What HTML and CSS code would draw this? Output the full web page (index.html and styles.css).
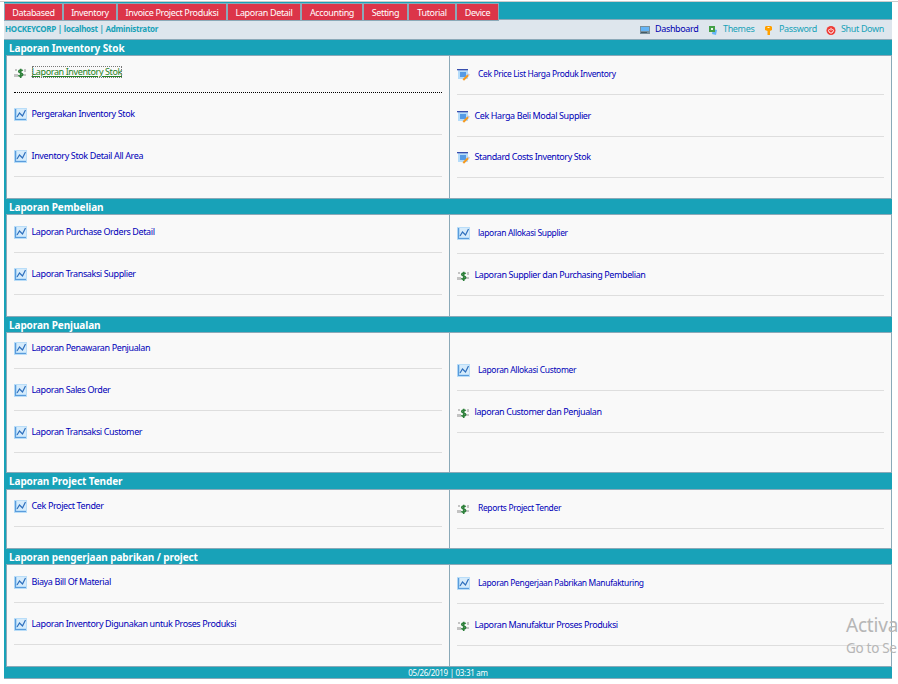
FILE: index.html
```
<!DOCTYPE html>
<html lang="id">
<head>
<meta charset="utf-8">
<title>Laporan</title>
<link rel="stylesheet" href="styles.css">
</head>
<body>
<svg class="defs" aria-hidden="true">
  <symbol id="chart" viewBox="0 0 13 13"><path fill="#b9ddf8" d="M0 0h13v13H0z"/><path fill="#d5ebfb" d="M3 1h9v9H3z"/><path d="M1.500 1v10.500H12" fill="none" stroke="#5a9cdc" stroke-width="1.200"/><path d="M3 9l2.500-4 3 3L11.500 2" fill="none" stroke="#2f70bd" stroke-width="1.200"/></symbol>
  <symbol id="money" viewBox="0 0 13 13"><path fill="#c3c3c3" d="M1 3h2v2H1zM0 8h4v3H0zM10 3h2v3h-2zM9 8h3v2H9z"/><path d="M8.700 4.800C7.800 3.600 4.700 3.700 4.700 5.500c0 1.900 4 1.200 4 3.100 0 1.900-3.400 1.900-4.300.6M6.700 2.700v9.300" fill="none" stroke="#2d803a" stroke-width="1.600"/></symbol>
  <symbol id="list" viewBox="0 0 13 13"><path fill="#b5dcfa" d="M1 2h10v9H1z"/><path fill="#559be5" d="M3 4h6v5H3z"/><path fill="#394fae" d="M0 1h11v1.300H0z"/><path d="M6.300 12l5-5" stroke="#f5991e" stroke-width="2"/><path d="M11 7.300l1.200-1.200" stroke="#c9c9dd" stroke-width="2"/></symbol>
  <symbol id="screen" viewBox="0 0 10 10"><path fill="#78909c" d="M0 1h10v8H0z"/><path fill="#64b5f6" d="M1 2h8v4H1z"/><path fill="#455a64" d="M1 7h6v1H1z"/></symbol>
  <symbol id="themes" viewBox="0 0 10 10"><path fill="#64b5f6" d="M5 4l4 1-1 5-4-1z"/><path fill="#43a047" d="M1 1h6v6H1z"/><path fill="#e8f5e9" d="M3 3h2v2H3z"/></symbol>
  <symbol id="key" viewBox="0 0 10 10"><path fill="#ffa000" d="M2 1h5l1 1v3L6 6v4H3.500V6L1 5V2z"/><path fill="#fff3cf" d="M3.500 2h2v1h-2z"/></symbol>
  <symbol id="power" viewBox="0 0 10 10"><circle cx="5" cy="5.500" r="4.500" fill="#ef3b36"/><path d="M3.500 4a2.300 2.300 0 1 0 3 0M5 2.800v2.700" stroke="#fff" fill="none"/></symbol>
</svg>
<div class="app">
  <nav class="menu">
    <a class="w1">Databased</a><a class="w2">Inventory</a><a class="w3">Invoice Project Produksi</a><a class="w4">Laporan Detail</a><a class="w5">Accounting</a><a class="w6">Setting</a><a class="w7">Tutorial</a><a class="w8">Device</a>
  </nav>
  <div class="userbar">
    <b>HOCKEYCORP | localhost | Administrator</b>
    <div class="tools">
      <a class="current t1"><svg><use href="#screen"/></svg><span>Dashboard</span></a>
      <a class="t2"><svg><use href="#themes"/></svg><span>Themes</span></a>
      <a class="t3"><svg><use href="#key"/></svg><span>Password</span></a>
      <a class="t4"><svg><use href="#power"/></svg><span>Shut Down</span></a>
    </div>
  </div>

  <h2>Laporan Inventory Stok</h2>
  <section class="stock">
    <ul>
      <li class="focus"><svg><use href="#money"/></svg><a>Laporan Inventory Stok</a></li>
      <li><svg><use href="#chart"/></svg><a>Pergerakan Inventory Stok</a></li>
      <li><svg><use href="#chart"/></svg><a>Inventory Stok Detail All Area</a></li>
    </ul>
    <ul>
      <li><svg><use href="#list"/></svg><a>Cek Price List Harga Produk Inventory</a></li>
      <li><svg><use href="#list"/></svg><a>Cek Harga Beli Modal Supplier</a></li>
      <li class="short"><svg><use href="#list"/></svg><a>Standard Costs Inventory Stok</a></li>
    </ul>
  </section>

  <h2>Laporan Pembelian</h2>
  <section class="purchase">
    <ul>
      <li><svg><use href="#chart"/></svg><a>Laporan Purchase Orders Detail</a></li>
      <li><svg><use href="#chart"/></svg><a>Laporan Transaksi Supplier</a></li>
    </ul>
    <ul>
      <li><svg><use href="#chart"/></svg><a>laporan Allokasi Supplier</a></li>
      <li><svg><use href="#money"/></svg><a>Laporan Supplier dan Purchasing Pembelian</a></li>
    </ul>
  </section>

  <h2>Laporan Penjualan</h2>
  <section class="sales">
    <ul>
      <li><svg><use href="#chart"/></svg><a>Laporan Penawaran Penjualan</a></li>
      <li><svg><use href="#chart"/></svg><a>Laporan Sales Order</a></li>
      <li><svg><use href="#chart"/></svg><a>Laporan Transaksi Customer</a></li>
    </ul>
    <ul>
      <li><svg><use href="#chart"/></svg><a>Laporan Allokasi Customer</a></li>
      <li><svg><use href="#money"/></svg><a>laporan Customer dan Penjualan</a></li>
    </ul>
  </section>

  <h2 class="tall">Laporan Project Tender</h2>
  <section class="tender">
    <ul>
      <li><svg><use href="#chart"/></svg><a>Cek Project Tender</a></li>
    </ul>
    <ul>
      <li><svg><use href="#money"/></svg><a>Reports Project Tender</a></li>
    </ul>
  </section>

  <h2>Laporan pengerjaan pabrikan / project</h2>
  <section class="factory">
    <ul>
      <li><svg><use href="#chart"/></svg><a>Biaya Bill Of Material</a></li>
      <li><svg><use href="#chart"/></svg><a>Laporan Inventory Digunakan untuk Proses Produksi</a></li>
    </ul>
    <ul>
      <li><svg><use href="#chart"/></svg><a>Laporan Pengerjaan Pabrikan Manufakturing</a></li>
      <li><svg><use href="#money"/></svg><a>Laporan Manufaktur Proses Produksi</a></li>
    </ul>
  </section>
  <footer>05/26/2019 | 03:31 am</footer>
</div>
<div class="watermark"><p>Activa</p><p class="sub">Go to Se</p></div>
</body>
</html>
```
FILE: styles.css
```
* { box-sizing: border-box; }
html, body { overflow: hidden; }
body {
  margin: 0;
  height: 684px;
  padding-top: 1px;
  background: #fff;
  font: 9px/13px "Noto Sans", sans-serif;
  letter-spacing: -0.35px;
}
body::before { content: ""; display: block; height: 1px; background: #ccc; }
.defs { display: none; }
.app { width: 888px; margin-left: 4px; background: #18a2b8; }
.menu { display: flex; height: 17px; padding-top: 1px; }
.menu a {
  height: 18px;
  flex: none;
  border: 1px solid #8ba9b8;
  background: #dc3549;
  color: #fff;
  line-height: 17px;
  text-align: center;
  position: relative;
}
.w1 { width: 59px; }
.w2 { width: 54px; }
.w3 { width: 110px; }
.w4 { width: 74px; }
.w5 { width: 62px; }
.w6 { width: 45px; }
.w7 { width: 48px; }
.w8 { width: 43px; }
.userbar {
  display: flex;
  justify-content: space-between;
  height: 21px;
  padding-left: 1px;
  border-top: 1px solid #8ba9b8;
  border-bottom: 1px solid #8ba9b8;
  background: #dee6ed;
  color: #18a2b8;
  line-height: 18px;
}
.userbar b { font-size: 8px; letter-spacing: -0.27px; }
.tools { display: flex; letter-spacing: -0.35px; }
.tools a { display: flex; align-items: center; height: 18px; }
.tools svg { width: 10px; height: 10px; margin-top: 2px; }
.tools span { margin-left: 5px; white-space: nowrap; }
.t1 { width: 68px; }
.t2 { width: 56px; }
.t3 { width: 62px; }
.t4 { width: 66px; }
.tools .current { color: #0000b0; }
h2 {
  margin: 0;
  height: 15px;
  padding-left: 5px;
  color: #fff;
  font-size: 10px;
  line-height: 17px;
  letter-spacing: -0.1px;
}
h2.tall { height: 16px; }
section {
  display: grid;
  grid-template-columns: 442px 442px;
  margin-left: 2px;
  border: 1px solid #8ba9b8;
  background: #f9f9f9;
}
ul { margin: 0; padding: 0 7px; list-style: none; }
ul + ul { border-left: 1px solid #8ba9b8; }
li {
  display: flex;
  align-items: flex-end;
  height: 42px;
  padding-bottom: 13px;
  border-bottom: 1px solid #dedede;
  color: #0000b8;
  white-space: nowrap;
}
ul:first-child li { letter-spacing: -0.38px; }
ul + ul li { letter-spacing: -0.4px; }
li svg { width: 13px; height: 13px; flex: none; }
li a { margin: 0 0 1px 4.500px; }
ul + ul li:first-child a {
  margin-left: 8px;
  font-size: 8.500px;
  letter-spacing: -0.36px;
}
li.short { height: 41px; }
.stock { height: 144px; }
.purchase, .factory { height: 103px; }
.sales { height: 141px; }
.tender { height: 60px; }
li:first-child { height: 38px; }
.stock li:first-child, .tender li:first-child { height: 37px; }
.sales li:first-child { height: 36px; }
section ul + ul li:first-child { height: 39px; }
.stock ul + ul li:first-child, .tender ul + ul li:first-child { height: 39px; }
.sales ul + ul li:first-child { height: 58px; }
li.focus { border-bottom: 1px dotted #000; }
li.focus a {
  height: 12px;
  line-height: 11px;
  color: #228022;
  text-decoration: underline;
  outline: 1px dotted #777;
  outline-offset: -1px;
}
footer {
  height: 12px;
  border-bottom: 1px solid #8ba9b8;
  color: #fff;
  font-size: 8px;
  line-height: 12px;
  letter-spacing: -0.3px;
  text-align: center;
}
.watermark {
  position: absolute;
  left: 846px;
  top: 613px;
  width: 52px;
  color: #b6b6b6;
  letter-spacing: -0.2px;
  white-space: nowrap;
}
.watermark p { margin: 0; font-size: 19px; line-height: 25px; }
.watermark .sub { font-size: 13.500px; line-height: 20px; letter-spacing: -0.3px; }
```
